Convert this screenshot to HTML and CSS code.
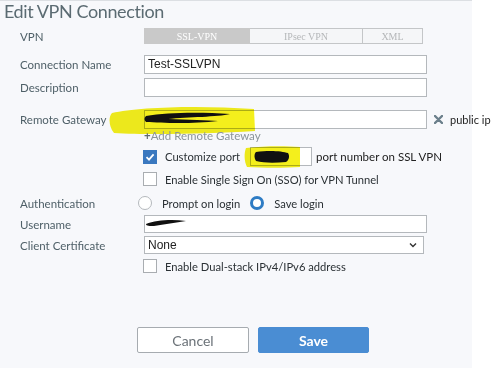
FILE: index.html
```html
<!DOCTYPE html>
<html>
<head>
    <title>Edit VPN Connection</title>
    <link rel="stylesheet" href="styles.css">
</head>
<body>
    <div class="panel">
        <h1 class="title">Edit VPN Connection</h1>

        <div class="row row-vpn">
            <span class="label">VPN</span>
            <div class="tabs">
                <span class="tab tab-active">SSL-VPN</span>
                <span class="tab tab-ipsec">IPsec VPN</span>
                <span class="tab tab-xml">XML</span>
            </div>
        </div>

        <div class="row row-name">
            <span class="label">Connection Name</span>
            <div class="input">Test-SSLVPN</div>
        </div>

        <div class="row row-desc">
            <span class="label">Description</span>
            <div class="input"></div>
        </div>

        <div class="row row-gw">
            <span class="label">Remote Gateway</span>
            <div class="input"></div>
            <svg class="remove" width="9" height="9" viewBox="0 0 9 9">
                <path d="M1 1 L8 8 M8 1 L1 8" stroke="#6b7f8b" stroke-width="2.4" stroke-linecap="round"/>
            </svg>
            <span class="note">public ip</span>
            <!-- annotation over the gateway field -->
            <svg class="mark mark-gw" width="150" height="34" viewBox="0 0 150 34">
                <path d="M4 10 C30 4 90 2 146 6 L147 28 C100 31 40 32 6 30 C1 24 0 14 4 10 Z" fill="#f4ef1c"/>
                <path d="M38 13 C60 9 95 9 122 11 C110 14 80 14 60 16 C80 17 100 17 110 18 C85 21 55 20 38 19 C36 17 36 15 38 13 Z" fill="#111"/>
            </svg>
        </div>

        <div class="row row-add">
            <span class="label"></span>
            <span class="add"><b>+</b>Add Remote Gateway</span>
        </div>

        <div class="row row-port">
            <span class="label"></span>
            <span class="check checked">
                <svg width="10" height="10" viewBox="0 0 10 10"><path d="M1.5 5.2 L4 7.6 L8.6 2.4" stroke="#fff" stroke-width="1.8" fill="none"/></svg>
            </span>
            <span class="check-text">Customize port</span>
            <div class="input input-port"></div>
            <span class="note note-port">port number on SSL VPN</span>
            <svg class="mark mark-port" width="58" height="24" viewBox="0 0 58 24">
                <path d="M2 3 C20 1 40 1 56 2 L56 22 C40 23 20 23 3 22 C0 16 0 8 2 3 Z" fill="#f4ef1c"/>
                <path d="M12 7 C25 5 38 6 44 8 C46 11 45 15 42 17 C30 18 20 18 12 16 C10 13 10 9 12 7 Z" fill="#111"/>
            </svg>
        </div>

        <div class="row row-sso">
            <span class="label"></span>
            <span class="check"></span>
            <span class="check-text">Enable Single Sign On (SSO) for VPN Tunnel</span>
        </div>

        <div class="row row-auth">
            <span class="label">Authentication</span>
            <span class="radio"></span>
            <span class="radio-text">Prompt on login</span>
            <span class="radio radio-on"></span>
            <span class="radio-text">Save login</span>
        </div>

        <div class="row row-user">
            <span class="label">Username</span>
            <div class="input"></div>
            <svg class="mark mark-user" width="44" height="10" viewBox="0 0 44 10">
                <path d="M2 6 C12 2 28 1 42 3 C32 5 20 6 10 8 C6 8 2 8 2 6 Z" fill="#111"/>
            </svg>
        </div>

        <div class="row row-cert">
            <span class="label">Client Certificate</span>
            <div class="input select">
                <span>None</span>
                <svg width="8" height="6" viewBox="0 0 8 6"><path d="M1 1.5 L4 4.5 L7 1.5" stroke="#333" stroke-width="1.4" fill="none"/></svg>
            </div>
        </div>

        <div class="row row-dual">
            <span class="label"></span>
            <span class="check"></span>
            <span class="check-text">Enable Dual-stack IPv4/IPv6 address</span>
        </div>

        <div class="buttons">
            <button class="btn btn-cancel">Cancel</button>
            <button class="btn btn-save">Save</button>
        </div>
    </div>
</body>
</html>
```

FILE: styles.css
```css
body {
    margin: 0;
    background: #fff;
    font-family: Lato, "Open Sans", sans-serif;
}
.panel {
    position: relative;
    width: 472px;
    height: 368px;
    background: #f7f8fb;
    border-top: 1px solid #dcdfe3;
    box-sizing: border-box;
}
.title {
    margin: 0 0 0 4px;
    height: 21px;
    font-size: 18px;
    font-weight: normal;
    letter-spacing: -0.4px;
    line-height: 20px;
    color: #5b6b72;
}
.row {
    position: relative;
    display: flex;
    align-items: center;
    padding-left: 20px;
    white-space: nowrap;
}
.label {
    width: 124px;
    flex: none;
    font-size: 11.5px;
    color: #4f6068;
}
.row-vpn { margin-top: 6px; height: 16px; }
.row-name { margin-top: 11px; height: 19px; }
.row-desc { margin-top: 4px; height: 19px; }
.row-gw { margin-top: 13px; height: 19px; }
.row-add { height: 13px; }
.row-port { margin-top: 5px; height: 19px; }
.row-sso { margin-top: 5px; height: 16px; }
.row-auth { margin-top: 8px; height: 16px; }
.row-user { margin-top: 4px; height: 18px; }
.row-cert { margin-top: 3px; height: 18px; }
.row-dual { margin-top: 4px; height: 16px; }

.tabs {
    display: flex;
    height: 16px;
}
.tab {
    display: flex;
    align-items: center;
    justify-content: center;
    height: 16px;
    box-sizing: border-box;
    border: 1px solid #c4c6c8;
    font-family: "Liberation Serif", serif;
    font-size: 10px;
    color: #b5b7b9;
    background: #f5f6f8;
}
.tab-active {
    width: 106px;
    background: #c9c9c9;
    border-color: #c9c9c9;
    color: #fff;
}
.tab-ipsec { width: 113px; border-left: none; }
.tab-xml { width: 60px; border-left: none; }

.input {
    width: 283px;
    height: 100%;
    flex: none;
    box-sizing: border-box;
    border: 1px solid #b4b8bc;
    background: #fff;
    font-family: "Liberation Sans", Arial, sans-serif;
    font-size: 12px;
    line-height: 17px;
    padding-left: 3px;
    color: #222;
}
.input-port {
    width: 62px;
    margin-left: 10px;
}
.select {
    width: 280px;
    display: flex;
    align-items: center;
    justify-content: space-between;
    padding-right: 6px;
}
.remove { margin-left: 7px; flex: none; }
.note {
    margin-left: 7px;
    font-size: 11px;
    color: #222;
}
.note-port { margin-left: 4px; font-size: 11.5px; }
.add {
    font-size: 11.5px;
    color: #8a9499;
}
.add b {
    color: #5f6a70;
}
.check {
    width: 14px;
    height: 14px;
    margin-left: -1px;
    box-sizing: border-box;
    border: 1px solid #a9adb1;
    background: #fff;
    display: flex;
    align-items: center;
    justify-content: center;
    flex: none;
}
.checked {
    background: #3a78bf;
    border-color: #3a78bf;
}
.check-text {
    margin-left: 8px;
    font-size: 11.2px;
    color: #2b3135;
}
.radio {
    width: 14px;
    height: 14px;
    margin-left: -6px;
    box-sizing: border-box;
    border: 1px solid #b4b8bc;
    border-radius: 50%;
    background: #fff;
    flex: none;
}
.radio-on {
    margin-left: 10px;
    border: 3.5px solid #2e7cc4;
}
.radio-text {
    margin-left: 10px;
    font-size: 11.2px;
    color: #2b3135;
}

.mark {
    position: absolute;
    mix-blend-mode: multiply;
}
.mark-gw { left: 108px; top: -7px; }
.mark-port { left: 244px; top: -2px; }
.mark-user { left: 144px; top: 3px; }

.buttons {
    display: flex;
    margin: 53px 0 0 137px;
    gap: 9px;
}
.btn {
    width: 112px;
    height: 26px;
    border-radius: 2px;
    font-family: Lato, sans-serif;
    font-size: 14px;
}
.btn-cancel {
    background: #fff;
    border: 1px solid #a6abb0;
    color: #6b7278;
}
.btn-save {
    width: 111px;
    background: #4a8dd3;
    border: 1px solid #4a8dd3;
    color: #fff;
    font-weight: bold;
}
```
